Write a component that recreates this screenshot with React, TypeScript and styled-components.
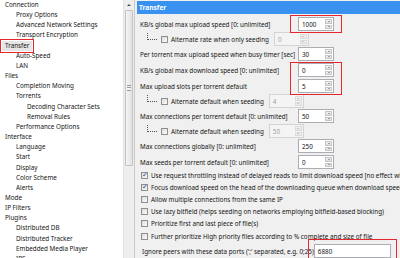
import React from "react";
import styled, { createGlobalStyle } from "styled-components";

const GlobalStyle = createGlobalStyle`
  html, body {
    margin: 0;
    padding: 0;
    background: #ffffff;
  }
  * {
    box-sizing: border-box;
  }
`;

interface TreeNode {
  label: string;
  level: number;
  selected?: boolean;
}

interface Setting {
  kind: "spin" | "alt";
  label: string;
  value: string;
}

// left side: the preferences tree
const tree: TreeNode[] = [
  { label: "Connection", level: 0 },
  { label: "Proxy Options", level: 1 },
  { label: "Advanced Network Settings", level: 1 },
  { label: "Transport Encryption", level: 1 },
  { label: "Transfer", level: 0, selected: true },
  { label: "Auto-Speed", level: 1 },
  { label: "LAN", level: 1 },
  { label: "Files", level: 0 },
  { label: "Completion Moving", level: 1 },
  { label: "Torrents", level: 1 },
  { label: "Decoding Character Sets", level: 2 },
  { label: "Removal Rules", level: 2 },
  { label: "Performance Options", level: 1 },
  { label: "Interface", level: 0 },
  { label: "Language", level: 1 },
  { label: "Start", level: 1 },
  { label: "Display", level: 1 },
  { label: "Color Scheme", level: 1 },
  { label: "Alerts", level: 1 },
  { label: "Mode", level: 0 },
  { label: "IP Filters", level: 0 },
  { label: "Plugins", level: 0 },
  { label: "Distributed DB", level: 1 },
  { label: "Distributed Tracker", level: 1 },
  { label: "Embedded Media Player", level: 1 },
  { label: "IPS", level: 1 },
];

const settings: Setting[] = [
  { kind: "spin", label: "KB/s global max upload speed [0: unlimited]", value: "1000" },
  { kind: "alt", label: "Alternate rate when only seeding", value: "0" },
  { kind: "spin", label: "Per torrent max upload speed when busy timer [sec]", value: "30" },
  { kind: "spin", label: "KB/s global max download speed [0: unlimited]", value: "0" },
  { kind: "spin", label: "Max upload slots per torrent default", value: "5" },
  { kind: "alt", label: "Alternate default when seeding", value: "4" },
  { kind: "spin", label: "Max connections per torrent default [0: unlimited]", value: "50" },
  { kind: "alt", label: "Alternate default when seeding", value: "50" },
  { kind: "spin", label: "Max connections globally [0: unlimited]", value: "250" },
  { kind: "spin", label: "Max seeds per torrent default [0: unlimited]", value: "0" },
];

const checks = [
  { label: "Use request throttling instead of delayed reads to limit download speed [no effect when using uTP]", checked: true },
  { label: "Focus download speed on the head of the downloading queue when download speed is limited", checked: true },
  { label: "Allow multiple connections from the same IP", checked: false },
  { label: "Use lazy bitfield (helps seeding on networks employing bitfield-based blocking)", checked: false },
  { label: "Prioritize first and last piece of file(s)", checked: false },
  { label: "Further prioritize High priority files according to % complete and size of file", checked: false },
];

const Window = styled.div`
  display: flex;
  width: 400px;
  height: 258px;
  overflow: hidden;
  font-family: "Noto Sans", "DejaVu Sans", sans-serif;
  font-size: 6.3px;
  color: #151515;
`;

const TreePane = styled.div`
  width: 135px;
  display: flex;
  background: #ffffff;
  border-right: 1px solid #c9c9c9;
  overflow: hidden;
`;

const TreeList = styled.ul`
  flex: 1;
  margin: 0;
  padding: 0;
  list-style: none;
  overflow: hidden;
`;

const TreeItem = styled.li<{ $level: number }>`
  height: 10.17px;
  line-height: 10.17px;
  padding-left: ${(p) => 5 + p.$level * 11}px;
  white-space: nowrap;
`;

const SelectedLabel = styled.span`
  display: inline-block;
  line-height: 10px;
  padding: 0 3px;
  margin-left: -3px;
  background: #e6e6e6;
  outline: 1.5px solid #e5262b;
  outline-offset: 1.5px;
`;

const Scrollbar = styled.div`
  width: 11px;
  display: flex;
  flex-direction: column;
  background: #eeeeee;
  border-left: 1px solid #e3e3e3;
  padding: 0 1px;
`;

const ScrollArrow = styled.div`
  height: 10px;
  display: flex;
  align-items: center;
  justify-content: center;
  &::before {
    content: "";
    border-left: 2px solid transparent;
    border-right: 2px solid transparent;
    border-bottom: 2px solid #505050;
  }
`;

const ScrollThumb = styled.div`
  height: 156px;
  border: 1px solid #c3c3c3;
  border-radius: 1px;
  background: linear-gradient(to right, #f4f4f4, #e2e2e2);
  display: flex;
  align-items: center;
  justify-content: center;
  &::before {
    content: "";
    width: 4px;
    height: 4px;
    border-top: 1px solid #9a9a9a;
    border-bottom: 1px solid #9a9a9a;
    background: linear-gradient(#f4f4f4 0 1px, #9a9a9a 1px 2px, #f4f4f4 2px);
  }
`;

const RightPane = styled.div`
  position: relative;
  flex: 1;
  background: #f0f0f0;
  overflow: hidden;
  white-space: nowrap;
`;

const Header = styled.div`
  height: 13px;
  margin: 1px 0 2px 2px;
  padding-left: 2px;
  background: #3a92f0;
  color: #ffffff;
  font-weight: 700;
  font-size: 6.6px;
  line-height: 13px;
`;

const Form = styled.div`
  display: flex;
  flex-direction: column;
  padding-left: 5px;
`;

const SpinRow = styled.div`
  display: grid;
  grid-template-columns: 158px auto;
  align-items: center;
  height: 16px;
`;

const AltRow = styled.div`
  display: flex;
  align-items: center;
  height: 14px;
  padding-left: 7px;
`;

const Connector = styled.span`
  width: 10px;
  height: 7px;
  margin-top: -6px;
  margin-right: 4px;
  border-left: 1px dotted #555;
  border-bottom: 1px dotted #555;
`;

const Box = styled.span<{ $checked?: boolean }>`
  position: relative;
  width: 7px;
  height: 7px;
  flex: none;
  border: 1px solid #8f8f8f;
  background: linear-gradient(135deg, #dcdcdc, #fbfbfb);
  margin-right: 3px;
  &::after {
    content: ${(p) => (p.$checked ? '"✓"' : "none")};
    position: absolute;
    left: 0px;
    top: -3px;
    font-size: 7px;
    font-weight: 700;
    color: #2a4f9c;
  }
`;

const AltSlot = styled.span`
  margin-left: 5px;
  display: inline-flex;
`;

const Spin = styled.span<{ $disabled?: boolean; $width?: number }>`
  display: inline-flex;
  width: ${(p) => p.$width ?? 36}px;
  height: 14px;
  border: 1px solid ${(p) => (p.$disabled ? "#d3d3d3" : "#abadb3")};
  background: ${(p) => (p.$disabled ? "#f4f4f4" : "#ffffff")};
  color: ${(p) => (p.$disabled ? "#a0a0a0" : "#111")};
  align-items: center;
`;

const SpinValue = styled.span`
  flex: 1;
  padding-left: 3px;
`;

const SpinButtons = styled.span<{ $disabled?: boolean }>`
  width: 8px;
  height: 100%;
  display: flex;
  flex-direction: column;
  padding: 1px 1px 1px 0;
  gap: 1px;
  opacity: ${(p) => (p.$disabled ? 0.55 : 1)};
`;

const SpinButton = styled.span<{ $down?: boolean }>`
  flex: 1;
  background: linear-gradient(#f2f2f2, #dddddd);
  border: 1px solid #c7c7c7;
  display: flex;
  align-items: center;
  justify-content: center;
  &::before {
    content: "";
    border-left: 1.5px solid transparent;
    border-right: 1.5px solid transparent;
    ${(p) => (p.$down ? "border-top" : "border-bottom")}: 1.5px solid #555;
  }
`;

const ChecksBlock = styled.div`
  margin-top: -1px;
`;

const CheckRow = styled.div`
  display: flex;
  align-items: center;
  height: 12.2px;
  padding-left: 1px;
`;

const PortsRow = styled.div`
  display: flex;
  align-items: center;
  justify-content: space-between;
  height: 18px;
  padding: 0 10px 0 2px;
`;

const PortsInput = styled.span`
  display: inline-flex;
  align-items: center;
  flex: none;
  width: 77px;
  height: 14px;
  padding-left: 3px;
  background: #ffffff;
  border: 1px solid #abadb3;
`;

// red boxes drawn over the screenshot
const Mark = styled.div<{ $x: number; $y: number; $w: number; $h: number }>`
  position: absolute;
  left: ${(p) => p.$x}px;
  top: ${(p) => p.$y}px;
  width: ${(p) => p.$w}px;
  height: ${(p) => p.$h}px;
  border: 1.5px solid #e5262b;
  pointer-events: none;
`;

function SpinBox({ value, disabled, width }: { value: string; disabled?: boolean; width?: number }) {
  return (
    <Spin $disabled={disabled} $width={width}>
      <SpinValue>{value}</SpinValue>
      <SpinButtons $disabled={disabled}>
        <SpinButton />
        <SpinButton $down />
      </SpinButtons>
    </Spin>
  );
}

export default function App() {
  return (
    <>
      <GlobalStyle />
      <Window>
        <TreePane>
          <TreeList>
            {tree.map((node, i) => (
              <TreeItem key={i} $level={node.level}>
                {node.selected ? <SelectedLabel>{node.label}</SelectedLabel> : node.label}
              </TreeItem>
            ))}
          </TreeList>
          <Scrollbar>
            <ScrollArrow />
            <ScrollThumb />
          </Scrollbar>
        </TreePane>
        <RightPane>
          <Header>Transfer</Header>
          <Form>
            {settings.map((s, i) =>
              s.kind === "spin" ? (
                <SpinRow key={i}>
                  <span>{s.label}</span>
                  <SpinBox value={s.value} />
                </SpinRow>
              ) : (
                <AltRow key={i}>
                  <Connector />
                  <Box />
                  <span>{s.label}</span>
                  <AltSlot>
                    <SpinBox value={s.value} disabled width={35} />
                  </AltSlot>
                </AltRow>
              )
            )}
            <ChecksBlock>
              {checks.map((c, i) => (
                <CheckRow key={i}>
                  <Box $checked={c.checked} />
                  <span>{c.label}</span>
                </CheckRow>
              ))}
            </ChecksBlock>
            <PortsRow>
              <span>Ignore peers with these data ports (';' separated, e.g. 0;25)</span>
              <PortsInput>6880</PortsInput>
            </PortsRow>
          </Form>
          <Mark $x={155} $y={15} $w={52} $h={18} />
          <Mark $x={155} $y={62} $w={52} $h={33} />
          <Mark $x={173} $y={239} $w={89} $h={22} />
        </RightPane>
      </Window>
    </>
  );
}
